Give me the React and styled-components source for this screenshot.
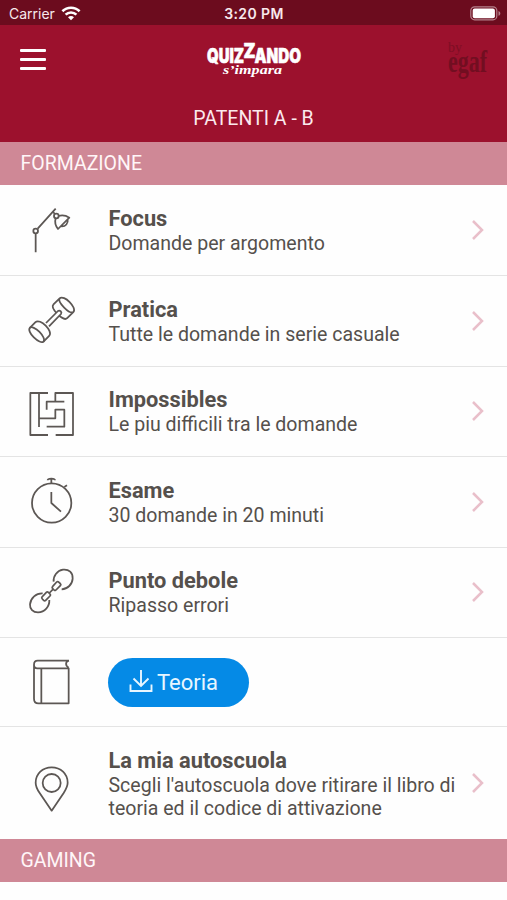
import React from 'react';
import styled, { createGlobalStyle } from 'styled-components';

const rows = [
  { icon: 'lamp', title: 'Focus', text: 'Domande per argomento', height: 90.4, iconTop: 14 },
  { icon: 'dumbbell', title: 'Pratica', text: 'Tutte le domande in serie casuale', height: 90.4, iconTop: 14 },
  { icon: 'maze', title: 'Impossibles', text: 'Le piu difficili tra le domande', height: 90.4, iconTop: 13.5 },
  { icon: 'stopwatch', title: 'Esame', text: '30 domande in 20 minuti', height: 90.4, iconTop: 13 },
  { icon: 'chain', title: 'Punto debole', text: 'Ripasso errori', height: 90.4, iconTop: 12.5 },
  { icon: 'book', button: 'Teoria', height: 89.5, iconTop: 12.5 },
  {
    icon: 'pin',
    title: 'La mia autoscuola',
    text: "Scegli l'autoscuola dove ritirare il libro di teoria ed il codice di attivazione",
    height: 112.5,
    iconTop: 28,
  },
];

const iconShapes = {
  lamp: (
    <>
      <path d="M47 160V103M53 89L107 29M98 38l7 7" />
      <circle cx="47" cy="96" r="7" />
      <circle cx="109" cy="51" r="7" />
      <path d="M115 51C128 47 139 50 148 56L114 90C106 80 104 68 107 58M143 61c2 12-6 22-19 21" />
    </>
  ),
  dumbbell: (
    <>
      <g transform="translate(50 134) rotate(45)">
        <ellipse rx="29" ry="12" />
        <path d="M-29 0v-24C-29-43 29-43 29-24V0" />
      </g>
      <g transform="translate(121 64) rotate(45)">
        <path d="M-29 0v-26C-29-44 29-44 29-26V0M-29 0C-29 16 29 16 29 0M-29-26C-26-13 26-13 29-26" />
      </g>
      <path d="M78 99l36-36c5-4 13 3 9 9l-36 37" fill="#fefefe" />
    </>
  ),
  maze: (
    <path d="M84 39H31v126h53M57 39v102M57 115h49V89h27v51H80M80 89V65h53M106 65V39h53v126h-52" />
  ),
  stopwatch: (
    <>
      <circle cx="95" cy="99" r="59" />
      <path d="M94 66v33l29 26M94 40V28M83 31c0-5 5-5 11-5s11 0 11 5M133 51l8-5" />
    </>
  ),
  chain: (
    <>
      <path d="M101 65c-2-17 10-33 28-36 18-2 30 9 29 27-1 17-15 31-33 32" />
      <path d="M68 100c-20-1-36 14-38 33-1 14 9 24 24 24 20-1 35-17 34-37" />
      <path d="M98 79l12-13q3-3 7 1l4 4q3 3 0 6l-13 13q-3 3-6 0l-4-4q-3-4 0-7zM66 111l13-14q3-3 7 1l4 4q3 3 0 6l-13 13q-3 3-6 0l-4-4q-3-3-1-6zM88 99l13-13" />
    </>
  ),
  book: (
    <path d="M147 32H53q-11 0-11 12v102q0 14 13 14h91V55H52q-10 0-10-11M64 55v105M147 32c-11 2-12 15-1 21" />
  ),
  pin: (
    <>
      <path d="M95 167L59 114C50 101 47 92 47 83C47 56 68 37 95 37s48 19 48 46c0 9-4 18-12 31z" />
      <circle cx="95" cy="84" r="27" />
    </>
  ),
};

const RowIcon = ({ name, top }) => (
  <LineIcon viewBox="0 0 210 195" $top={top}>
    {iconShapes[name]}
  </LineIcon>
);

const SectionRow = ({ row }) => (
  <Row $height={row.height}>
    <RowIcon name={row.icon} top={row.iconTop} />
    {row.button ? (
      <PillButton>
        <svg width="24" height="24" viewBox="0 0 24 24" fill="none" stroke="currentColor" strokeWidth="1.9">
          <path d="M12 0v16M4.5 8.5L12 16l7.5-7.5M1.5 14.5v6.5h21v-6.5" />
        </svg>
        {row.button}
      </PillButton>
    ) : (
      <>
        <RowBody>
          <RowTitle>{row.title}</RowTitle>
          <RowText>{row.text}</RowText>
        </RowBody>
        <Chevron viewBox="0 0 14 22">
          <path d="M2 2l9 9-9 9" />
        </Chevron>
      </>
    )}
  </Row>
);

export default function App () {
  return (
    <Screen>
      <GlobalStyle />
      <StatusBar>
        <Carrier>
          Carrier
          <svg width="20" height="15" viewBox="0 0 20 15" fill="none" stroke="#fff" strokeWidth="2.6">
            <path d="M1.4 5.3C6.3.5 13.7.5 18.6 5.3" />
            <path d="M4.6 8.6c3-2.9 7.8-2.9 10.8 0" />
            <path d="M10 14.2L7 11.3c1.7-1.6 4.3-1.6 6 0z" fill="#fff" stroke="none" />
          </svg>
        </Carrier>
        <Clock>3:20 PM</Clock>
        <Battery width="31" height="15" viewBox="0 0 31 15">
          <rect x=".8" y=".8" width="26" height="13" rx="3.8" fill="none" stroke="#b4808b" strokeWidth="1.2" />
          <rect x="2.7" y="2.5" width="22.2" height="9.7" rx="2" fill="#fff" />
          <path d="M28.5 5c2.4.8 2.4 4 0 4.8z" fill="#b4808b" />
        </Battery>
      </StatusBar>
      <Header>
        <HeaderBar>
          <MenuButton aria-label="Menu">
            <span />
            <span />
            <span />
          </MenuButton>
          <Logo width="100" height="40" viewBox="0 0 100 40">
            <g
              fontFamily="Inter, sans-serif"
              fontWeight="900"
              fontSize="19.5"
              stroke="#fff"
              strokeWidth=".6"
              strokeLinejoin="round"
            >
              <text x="3" y="23" textLength="37" lengthAdjust="spacingAndGlyphs">QUIZ</text>
              <text x="39.5" y="17.5" textLength="12" lengthAdjust="spacingAndGlyphs">Z</text>
              <text x="50.5" y="23" textLength="46.5" lengthAdjust="spacingAndGlyphs">ANDO</text>
            </g>
            <text
              x="19"
              y="34"
              fontFamily="Liberation Serif, serif"
              fontStyle="italic"
              fontWeight="700"
              fontSize="12"
              textLength="59"
              lengthAdjust="spacingAndGlyphs"
            >
              s’impara
            </text>
          </Logo>
          <Brand width="48" height="48" viewBox="0 0 48 48">
            <text x="5" y="16" fontSize="15" textLength="14" lengthAdjust="spacingAndGlyphs" opacity=".7">by</text>
            <text x="5" y="36" fontSize="31" fontWeight="700" textLength="39" lengthAdjust="spacingAndGlyphs">egaf</text>
          </Brand>
        </HeaderBar>
        <HeaderTitle>PATENTI A - B</HeaderTitle>
      </Header>
      <SectionHeader>FORMAZIONE</SectionHeader>
      {rows.map(row => (
        <SectionRow key={row.icon} row={row} />
      ))}
      <SectionHeader>GAMING</SectionHeader>
    </Screen>
  );
}

const GlobalStyle = createGlobalStyle`
  * {
    box-sizing: border-box;
  }
  body {
    margin: 0;
    background: #fefefe;
    font-family: Roboto, sans-serif;
  }
`;

const Screen = styled.div`
  height: 900px;
  overflow: hidden;
  background: #fefefe;
`;

const StatusBar = styled.div`
  display: grid;
  grid-template-columns: 1fr auto 1fr;
  align-items: center;
  height: 25px;
  padding: 2px 6px 0 9px;
  background: #6c0c1e;
  color: #f7e9ec;
  font-family: Inter, sans-serif;
  font-size: 14px;
`;

const Carrier = styled.div`
  display: flex;
  align-items: center;
  gap: 6px;
`;

const Clock = styled.div`
  margin-left: -2px;
  font-weight: 600;
  letter-spacing: 0.4px;
`;

const Battery = styled.svg`
  justify-self: end;
`;

const Header = styled.header`
  height: 117px;
  background: #9c112d;
  color: #fbe9ed;
`;

const HeaderBar = styled.div`
  display: grid;
  grid-template-columns: 1fr auto 1fr;
  align-items: center;
  height: 69px;
  padding: 0 16px 0 20px;
`;

const MenuButton = styled.button`
  display: flex;
  flex-direction: column;
  gap: 6px;
  width: 26px;
  padding: 0;
  border: 0;
  background: none;

  span {
    height: 3px;
    border-radius: 1px;
    background: #fff;
  }
`;

const Logo = styled.svg`
  margin-right: 4px;
  overflow: visible;
  fill: #fff;
`;

const Brand = styled.svg`
  justify-self: end;
  overflow: visible;
  fill: #720e21;
  font-family: 'Liberation Serif', serif;
`;

const HeaderTitle = styled.div`
  padding-top: 11px;
  font-size: 19.5px;
  line-height: 27px;
  text-align: center;
`;

const SectionHeader = styled.div`
  height: 43px;
  padding-left: 20.5px;
  background: #cf8896;
  color: #fff6f8;
  font-size: 19.5px;
  line-height: 44px;
`;

const Row = styled.div`
  display: flex;
  align-items: center;
  height: ${({ $height }) => $height}px;
  padding: 0 22px 0 20px;
  color: #55504c;

  & + & {
    border-top: 1px solid #e4e4e4;
  }
`;

const LineIcon = styled.svg`
  flex: none;
  align-self: flex-start;
  width: 70px;
  height: 65px;
  margin: ${({ $top }) => $top}px 18px 0 0;
  fill: none;
  stroke: #5c5754;
  stroke-width: 5.3;
  stroke-linejoin: round;
`;

const RowBody = styled.div`
  flex: 1;
  margin-right: -4px;
  padding-left: 0.5px;
`;

const RowTitle = styled.div`
  font-size: 21.8px;
  font-weight: 700;
  line-height: 27px;
`;

const RowText = styled.div`
  font-size: 19.55px;
  line-height: 23px;
`;

const Chevron = styled.svg`
  flex: none;
  width: 14px;
  height: 22px;
  margin-left: 4px;
  fill: none;
  stroke: #e9bfca;
  stroke-width: 2.5;
`;

const PillButton = styled.button`
  display: flex;
  align-items: center;
  gap: 4px;
  width: 141px;
  height: 49px;
  padding: 0 0 0 21px;
  border: 0;
  border-radius: 25px;
  background: #058ae6;
  color: #e8f6ff;
  font-family: inherit;
  font-size: 22px;
`;
